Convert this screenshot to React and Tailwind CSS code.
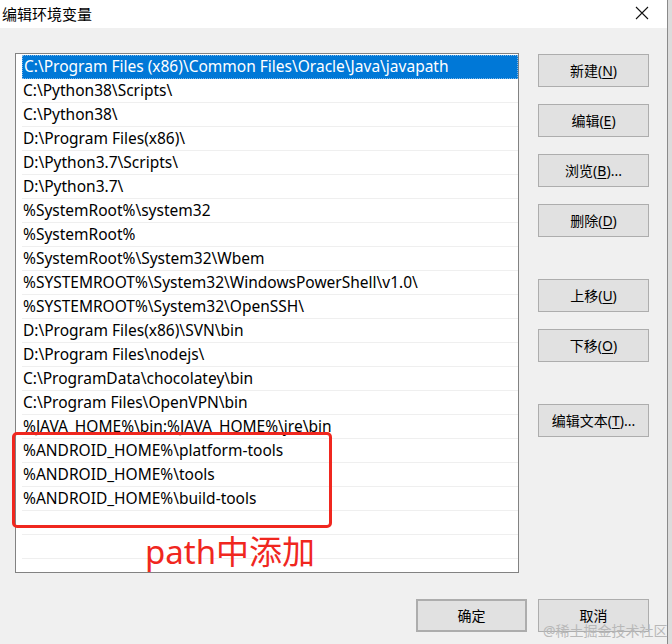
import React from 'react'

const paths = [
    'C:\\Program Files (x86)\\Common Files\\Oracle\\Java\\javapath',
    'C:\\Python38\\Scripts\\',
    'C:\\Python38\\',
    'D:\\Program Files(x86)\\',
    'D:\\Python3.7\\Scripts\\',
    'D:\\Python3.7\\',
    '%SystemRoot%\\system32',
    '%SystemRoot%',
    '%SystemRoot%\\System32\\Wbem',
    '%SYSTEMROOT%\\System32\\WindowsPowerShell\\v1.0\\',
    '%SYSTEMROOT%\\System32\\OpenSSH\\',
    'D:\\Program Files(x86)\\SVN\\bin',
    'D:\\Program Files\\nodejs\\',
    'C:\\ProgramData\\chocolatey\\bin',
    'C:\\Program Files\\OpenVPN\\bin',
    '%JAVA_HOME%\\bin;%JAVA_HOME%\\jre\\bin',
    '%ANDROID_HOME%\\platform-tools',
    '%ANDROID_HOME%\\tools',
    '%ANDROID_HOME%\\build-tools',
    '',
    '',
]

function Btn({ label, hotkey, tail = '', className = '' }) {
    return (
        <button className={`w-[111px] h-[33px] bg-[#e1e1e1] border border-[#adadad] text-[14px] text-black flex items-center justify-center ${className}`}>
            {label}
            {hotkey && (
                <>
                    (<span className="underline underline-offset-2">{hotkey}</span>)
                </>
            )}
            {tail}
        </button>
    )
}

export default function App() {
    return (
        <div
            className="relative w-[672px] h-[644px] flex overflow-hidden"
            style={{ fontFamily: '"Noto Sans", "Noto Sans CJK SC", sans-serif' }}
        >
            <div className="w-[668px] h-full bg-[#f0f0f0] border-r border-[#8a8a8a] flex flex-col">
                {/* title bar */}
                <div className="h-[28px] bg-white flex items-center justify-between pl-[2px] pr-[18px]">
                    <span className="text-[15px] text-black">编辑环境变量</span>
                    <svg width="14" height="14" viewBox="0 0 14 14" className="mt-[-2px]">
                        <path d="M1 1 L13 13 M13 1 L1 13" stroke="#111" strokeWidth="1.1" />
                    </svg>
                </div>

                <div className="flex pl-[15px] pt-[25px]">
                    <div className="w-[504px] h-[520px] bg-white border border-[#828282] pt-[1px] pl-[6px] overflow-hidden">
                        {paths.map((p, i) => (
                            <div
                                key={i}
                                className={`h-[24px] flex items-center pl-[1px] text-[15.5px] whitespace-nowrap border-b ${
                                    i === 0
                                        ? 'bg-[#0078d7] text-white border-dotted border border-[#7fb8e8]'
                                        : 'text-black border-[#efefef]'
                                }`}
                            >
                                {p}
                            </div>
                        ))}
                    </div>

                    <div className="ml-[19px] pt-[1px] flex flex-col">
                        <Btn label="新建" hotkey="N" />
                        <Btn label="编辑" hotkey="E" className="mt-[17px]" />
                        <Btn label="浏览" hotkey="B" tail="..." className="mt-[17px]" />
                        <Btn label="删除" hotkey="D" className="mt-[17px]" />
                        <Btn label="上移" hotkey="U" className="mt-[42px]" />
                        <Btn label="下移" hotkey="O" className="mt-[17px]" />
                        <Btn label="编辑文本" hotkey="T" tail="..." className="mt-[42px]" />
                    </div>
                </div>

                <div className="flex justify-end gap-[11px] pr-[18px] mt-[26px]">
                    <Btn label="确定" className="border-2 border-[#0078d7]" />
                    <Btn label="取消" />
                </div>
            </div>
            <div className="flex-1 h-full bg-[#dcdcdc]" />

            {/* annotation overlay */}
            <div className="absolute left-[12px] top-[432px] w-[320px] h-[96px] border-[3px] border-[#f0271f] rounded-[5px]" />
            <div className="absolute left-[145px] top-[535px] text-[33px] leading-none text-[#f0271f]">path中添加</div>
            <div className="absolute left-[543px] top-[620px] text-[14px] text-[#b8b8b8] whitespace-nowrap">@稀土掘金技术社区</div>
        </div>
    )
}
